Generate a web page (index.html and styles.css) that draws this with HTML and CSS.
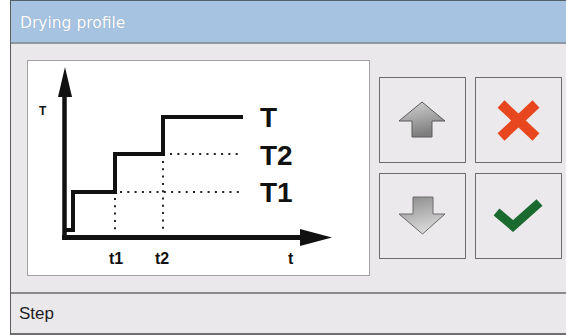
FILE: index.html
```html
<!DOCTYPE html>
<html lang="en">
<head>
<meta charset="UTF-8">
<meta name="viewport" content="width=device-width, initial-scale=1.0">
<title>Drying profile</title>
<link rel="stylesheet" href="styles.css">
</head>
<body>
<div class="window">
    <div class="titlebar">Drying profile</div>

    <div class="main">
        <div class="chart">
            <svg width="341" height="214" viewBox="28 62 341 214">
                <!-- dotted guides -->
                <g class="dots">
                    <line x1="170" y1="155" x2="240" y2="155"/>
                    <line x1="120" y1="193" x2="243" y2="193"/>
                    <line x1="115" y1="199" x2="115" y2="232"/>
                    <line x1="163" y1="162" x2="163" y2="232"/>
                </g>
                <!-- axes -->
                <line x1="64.5" y1="90" x2="64.5" y2="241" stroke="#111" stroke-width="4.5"/>
                <polygon points="65,68 72,98 58,98" fill="#111"/>
                <line x1="62" y1="238.5" x2="305" y2="238.5" stroke="#111" stroke-width="5"/>
                <polygon points="332,238.5 300,230 300,247" fill="#111"/>
                <!-- profile -->
                <polyline points="64,231 73,231 73,193 115,193 115,155 163,155 163,118 243,118"
                          fill="none" stroke="#111" stroke-width="4" stroke-linejoin="miter"/>
                <!-- labels -->
                <text x="39" y="116" class="lbl-s">T</text>
                <text x="260" y="128" class="lbl-l">T</text>
                <text x="260" y="166" class="lbl-l">T2</text>
                <text x="260" y="203" class="lbl-l">T1</text>
                <text x="109" y="265" class="lbl-m">t1</text>
                <text x="155" y="265" class="lbl-m">t2</text>
                <text x="288" y="265" class="lbl-m">t</text>
            </svg>
        </div>

        <div class="buttons">
            <button class="btn" type="button" title="Up">
                <svg width="85" height="84" viewBox="0 0 85 84">
                    <defs>
                        <linearGradient id="gUp" x1="0" y1="0" x2="0.3" y2="1">
                            <stop offset="0" stop-color="#d6d6d6"/>
                            <stop offset="1" stop-color="#7d7d7d"/>
                        </linearGradient>
                    </defs>
                    <polygon points="42,24 65,43 52,43 52,59 32,59 32,43 19,43" fill="url(#gUp)" stroke="#5a5a5a" stroke-width="1"/>
                </svg>
            </button>
            <button class="btn" type="button" title="Cancel">
                <svg width="85" height="84" viewBox="0 0 85 84">
                    <g stroke="#e8461e" stroke-width="10">
                        <line x1="25" y1="26" x2="60" y2="59"/>
                        <line x1="60" y1="26" x2="25" y2="59"/>
                    </g>
                </svg>
            </button>
            <button class="btn" type="button" title="Down">
                <svg width="85" height="84" viewBox="0 0 85 84">
                    <defs>
                        <linearGradient id="gDown" x1="0" y1="0" x2="0.3" y2="1">
                            <stop offset="0" stop-color="#8a8a8a"/>
                            <stop offset="1" stop-color="#d8d8d8"/>
                        </linearGradient>
                    </defs>
                    <polygon points="33,23 53,23 53,40 65,40 42.5,60 19,40 33,40" fill="url(#gDown)" stroke="#6a6a6a" stroke-width="1"/>
                </svg>
            </button>
            <button class="btn" type="button" title="OK">
                <svg width="85" height="84" viewBox="0 0 85 84">
                    <polyline points="20.5,38 37,52 63.5,28.5" fill="none" stroke="#1b6a2f" stroke-width="9" stroke-linejoin="miter"/>
                </svg>
            </button>
        </div>
    </div>

    <div class="footer">Step</div>
</div>
</body>
</html>
```

FILE: styles.css
```css
body {
    margin: 0;
    background-color: #fff;
    font-family: "Liberation Sans", Arial, sans-serif;
}

.window {
    margin-left: 10px;
    height: 335px;
    box-sizing: border-box;
    border-left: 1px solid #5c5c5c;
    border-top: 1px solid #56606a;
    background-color: #ebe8ec;
    display: flex;
    flex-direction: column;
}

.titlebar {
    height: 43px;
    flex: none;
    display: flex;
    align-items: center;
    padding: 2px 0 0 9px;
    box-sizing: border-box;
    background-color: #a6c4e2;
    border-bottom: 2px solid #8d98a3;
    color: #fff;
    font-family: "DejaVu Sans", sans-serif;
    font-size: 15.5px;
    text-shadow: 0 0 1px rgba(60, 80, 100, 0.35);
}

.main {
    flex: 1;
    display: flex;
    align-items: center;
    padding-left: 16px;
    gap: 9px;
}

.chart {
    width: 343px;
    height: 216px;
    box-sizing: border-box;
    background-color: #fff;
    border: 1px solid #a2a2a2;
}

.chart svg {
    display: block;
}

.dots line {
    stroke: #222;
    stroke-width: 2;
    stroke-dasharray: 2 5.3;
}

.lbl-s,
.lbl-m,
.lbl-l {
    font-family: "Liberation Sans", Arial, sans-serif;
    font-weight: bold;
    fill: #111;
}

.lbl-s {
    font-size: 12px;
}

.lbl-m {
    font-size: 16px;
}

.lbl-l {
    font-size: 28px;
}

.buttons {
    display: grid;
    grid-template-columns: 87px 87px;
    grid-template-rows: 86px 86px;
    column-gap: 9px;
    row-gap: 10px;
}

.btn {
    width: 87px;
    height: 86px;
    padding: 0;
    margin: 0;
    box-sizing: border-box;
    background-color: #ebe9ec;
    border: 1px solid #6c6c6c;
    display: flex;
    align-items: center;
    justify-content: center;
    cursor: pointer;
}

.btn svg {
    display: block;
}

.footer {
    height: 43px;
    flex: none;
    box-sizing: border-box;
    border-top: 2px solid #8a8a8a;
    border-bottom: 2px solid #6f6f6f;
    display: flex;
    align-items: center;
    padding-left: 8px;
    font-size: 17px;
    color: #1c1c1c;
}
```
